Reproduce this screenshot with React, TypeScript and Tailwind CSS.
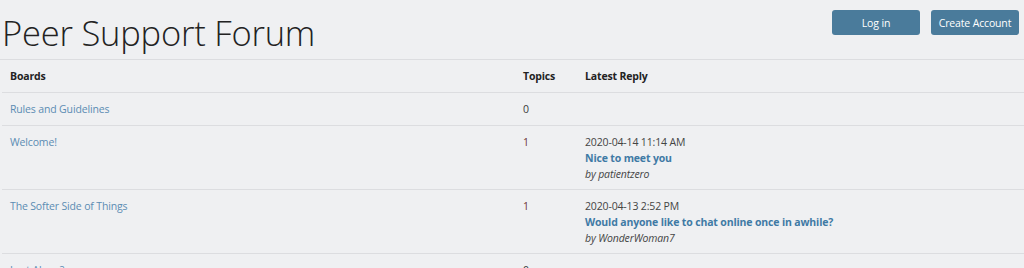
const boards = [
  { name: "Rules and Guidelines", topics: 0 },
  {
    name: "Welcome!",
    topics: 1,
    reply: { date: "2020-04-14 11:14 AM", title: "Nice to meet you", by: "patientzero" },
  },
  {
    name: "The Softer Side of Things",
    topics: 1,
    reply: {
      date: "2020-04-13 2:52 PM",
      title: "Would anyone like to chat online once in awhile?",
      by: "WonderWoman7",
    },
  },
  { name: "Lost Alone?", topics: 0 },
];

export default function App() {
  return (
    <div className="w-[1024px] h-[268px] overflow-hidden bg-[#eff0f2] text-[#333] font-['Open_Sans',sans-serif] text-[10.5px] tracking-[-0.15px] leading-[16px]">
      <header className="flex items-start justify-between pl-[2px] pr-[5px] border-b border-[#dcdde0] h-[60px]">
        <h1 className="text-[34.5px] font-light leading-none pt-[16px] text-[#222] tracking-[-0.2px]">
          Peer Support Forum
        </h1>
        <div className="flex gap-[11px] pt-[10px]">
          <button className="w-[88px] h-[25px] rounded-[3px] bg-[#4a7b9b] text-white">Log in</button>
          <button className="w-[88px] h-[25px] rounded-[3px] bg-[#4a7b9b] text-white">Create Account</button>
        </div>
      </header>

      <table className="w-[1022px] ml-[2px] border-collapse">
        <thead>
          <tr className="border-b border-[#dcdde0]">
            <th className="h-[32px] text-left font-bold pl-[8px] w-[521px] text-[#222]">Boards</th>
            <th className="text-left font-bold w-[62px] text-[#222]">Topics</th>
            <th className="text-left font-bold text-[#222]">Latest Reply</th>
          </tr>
        </thead>
        <tbody>
          {boards.map((b) => (
            <tr key={b.name} className="border-b border-[#dcdde0] align-top">
              <td className="pl-[8px] p-0 text-[#5b8cb2]">
                <div className="pt-[8px] min-h-[32px]">{b.name}</div>
              </td>
              <td className={b.topics ? "p-0 text-[#6a3434]" : "p-0 text-[#3a3a3a]"}>
                <div className="pt-[8px]">{b.topics}</div>
              </td>
              <td className="p-0 text-[#444]">
                {b.reply && (
                  <div className="flex flex-col pt-[8px] pb-[7px]">
                    <span>{b.reply.date}</span>
                    <span className="font-bold text-[#3f7aa5]">{b.reply.title}</span>
                    <span className="italic">by {b.reply.by}</span>
                  </div>
                )}
              </td>
            </tr>
          ))}
        </tbody>
      </table>
    </div>
  );
}
